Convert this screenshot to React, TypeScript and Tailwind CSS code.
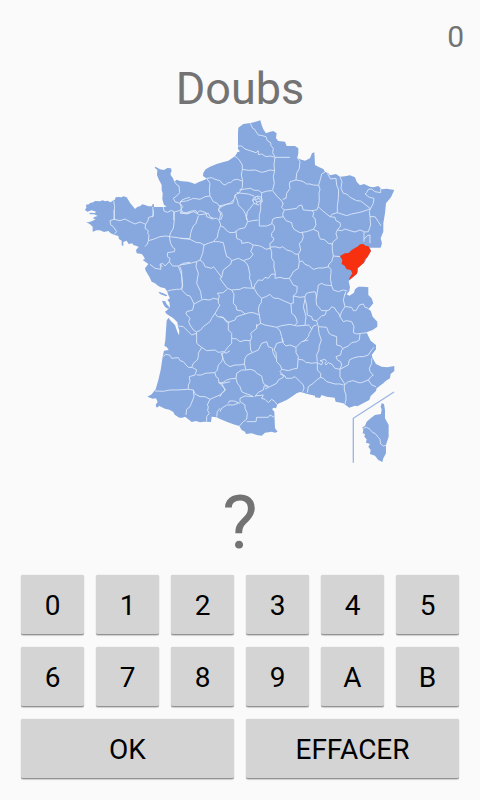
import { useState } from "react";

const COAST =
  "M541 31 532 34 512 39 490 42 475 53 474 70 474 108 474 118 480 124 472 127 467 136 458 143 445 152 428 157 410 162 390 170 377 178 370 188 369 198 381 206 365 213 355 217 345 222 335 218 325 215 300 213 290 209 283 215 279 205 272 195 272 188 275 184 273 175 262 174 252 180 240 178 226 170 224 173 232 180 231 195 236 208 245 225 245 240 248 250 247 268 252 285 260 289 254 291 222 291 222 283 218 282 216 289 205 289 195 285 187 283 180 289 173 290 165 297 158 288 151 280 145 270 140 262 130 259 125 262 115 261 107 262 104 270 98 272 92 277 82 272 75 274 68 271 60 274 45 273 40 277 30 279 27 283 18 284 19 293 15 300 22 305 35 301 48 305 45 309 28 308 30 313 43 313 53 318 45 320 38 325 47 328 35 334 25 337 18 336 30 343 38 350 38 365 50 361 60 361 72 366 85 363 92 370 102 374 115 378 117 387 125 392 125 406 130 408 130 396 140 392 146 402 157 400 150 396 160 402 158 404 170 408 176 411 168 420 170 430 185 432 190 438 195 447 188 450 200 458 205 462 195 475 197 482 208 500 215 515 225 520 235 528 242 532 255 535 262 545 265 555 270 565 262 570 268 577 270 590 262 600 255 605 260 612 280 625 292 637 294 650 298 662 297 676 292 665 285 645 272 632 265 623 260 632 258 660 256 690 253 708 260 711 266 720 252 722 248 740 242 780 235 810 227 838 215 853 202 860 218 866 228 865 233 875 227 885 230 893 238 888 255 896 268 899 280 906 284 914 298 923 307 923 315 920 325 928 335 936 348 933 360 937 372 935 393 936 395 920 410 922 420 927 440 935 460 943 478 948 485 960 495 965 498 972 515 970 530 975 545 977 555 968 575 965 585 968 593 965 585 955 583 905 576 897 582 893 588 895 593 882 620 870 635 860 650 850 660 846 670 848 682 852 705 857 705 862 720 864 725 855 740 860 764 863 767 875 790 880 808 893 825 887 832 889 845 882 868 870 872 858 888 843 890 835 910 820 918 812 930 805 932 792 943 783 943 768 922 772 905 770 888 762 878 745 875 735 888 718 888 705 872 692 865 678 860 667 878 660 892 650 892 635 878 620 872 602 865 598 880 580 875 565 865 555 865 545 865 532 850 530 835 530 825 538 822 548 808 557 800 553 808 543 810 532 806 513 830 492 833 475 855 455 862 442 873 423 870 413 880 413 902 413 906 400 902 385 910 365 910 340 915 310 918 280 933 262 943 240 920 236 905 238 895 228 880 232 870 230 852 222 840 226 830 215 825 202 810 196 795 199 780 200 768 192 750 196 745 190 735 185 730 177 718 172 705 165 704 145 703 127 696 130 690 145 675 152 660 148 652 143 655 130 655 115 645 108 620 108 615 95 595 93 588 85 590 70 580 63 568 66 558 70 550 58 545 45Z";

const ISLANDS =
  "M235 545 248 549 262 556 258 559 240 552ZM246 572 256 574 260 583 268 591 264 596 256 592 250 583ZM905 880 902 890 905 898 903 912 885 915 872 925 860 935 855 948 847 952 850 960 848 970 855 972 853 980 860 988 858 998 870 1002 865 1010 872 1020 870 1032 885 1037 895 1050 907 1056 910 1045 918 1030 918 1005 926 980 926 945 915 925 915 900 912 882Z";

const DOUBS =
  "M780 438 795 430 806 429 815 420 835 408 840 403 850 402 858 408 865 408 870 418 873 423 862 442 855 448 852 458 833 475 833 485 830 492 808 510 808 505 817 490 812 480 800 478 794 467 785 462 787 450Z";

type Region = { name: string; transform: string; d: string };

const BORDERS: Region[] = [
  {
    name: "Bretagne, Cotentin",
    transform: "translate(0 0)",
    d: "M284 215 290 224 297 228 299 248 290 258 280 265 285 275 300 280 306 270 318 265 330 262M250 291 252 303 262 307 275 301 283 306 298 302 306 305 303 290 300 280M283 306 281 330M306 305 318 310 330 308M101 273 104 290 102 305 104 330M218 291 220 305 218 322",
  },
  {
    name: "Picardie, Normandie",
    transform: "translate(300 0)",
    d: "M211 40 218 55 224 58 228 65 235 75 247 77 258 80 262 92 272 98 273 107 280 115 278 128 285 140M174 108 185 108 195 117 210 122 228 128 235 122 235 134 245 132 258 140 272 138 285 142 330 142M285 142 282 165 284 182 280 200 283 220 278 240M162 138 170 142 178 150 187 165 187 178 205 181 225 180 245 187 258 184 270 180 284 182M187 178 184 195 188 212 187 232 178 248M80 205 95 203 105 208 120 212 128 222 135 225 145 218 152 218 160 210 172 208 186 213M80 205 90 220 88 240 90 258 75 260 60 268 40 265 20 273 0 275 M0 280 8 290 0 302M90 258 100 275 112 280 118 288 125 290 140 283 158 280 163 265 165 255 178 248M125 290 115 300 122 312 118 330M178 240 195 237 212 235 222 241 235 241 245 248 262 243 278 242M170 248 185 250 205 252 222 258M222 262 235 258 245 263 247 275 235 285 222 280 218 270ZM216 272 225 268 226 261M226 269 238 265 242 274 230 276ZM232 258 235 265M228 282 232 276M245 248 244 270M165 255 172 270 175 285 190 300 198 315 200 330M222 280 210 295 202 305 200 318M278 242 290 258 303 270 310 282M308 268 318 265 320 250 330 235M0 308 20 312 40 305 50 310 60 302 78 308 80 320 100 328",
  },
  {
    name: "Ardennes, Lorraine, Alsace",
    transform: "translate(630 0)",
    d: "M22 143 30 155 28 175 20 190 18 210 0 215 -2 222 0 235M18 210 30 212 40 215 50 222 60 222 70 225 85 226M105 186 95 192 92 205 86 225 90 238 87 250 88 270 85 290M112 190 122 207 138 205 140 225 146 240 145 265 142 290 142 308M150 200 156 215 153 235 160 250 170 252 180 262 200 272 212 273 225 283 240 295M272 235 272 248 255 245 245 237 235 238 230 248 225 252 238 262 252 265 250 280 242 295M210 307 232 300 242 295",
  },
  {
    name: "Morbihan, Pays de la Loire",
    transform: "translate(0 270)",
    d: "M103 30 102 58 90 62 92 75 100 80 110 95 102 103M102 58 120 62 135 57 150 65 165 72 180 66 190 70 197 73M219 30 220 48 205 53 205 60 197 73 195 85 205 92 203 100 207 105 205 122 202 132 195 140M205 122 220 118 240 110 258 108 268 110M281 35 283 60 280 85 272 98 268 110 285 112 305 115 330 116M268 110 272 130 278 142 285 147 283 155 263 158 262 170 270 175 268 185 278 198 295 198 310 190 330 187M268 185 255 198 248 190 240 193 243 208 225 205 210 193M241 192 247 201M295 198 300 212 305 225 307 262 300 268 290 268 275 270 262 273",
  },
  {
    name: "Centre, Bourgogne",
    transform: "translate(300 270)",
    d: "M0 40 20 38 35 33 48 32 55 45 75 42 85 40 90 50 100 55 110 55 118 62 122 75M120 18 115 30 125 38 127 48 122 60M118 18 130 15 150 10 160 0M55 48 48 70 40 78 35 90 32 100 30 115M0 115 30 118 50 128 60 128 72 135M122 75 115 95 112 112 100 125 85 130 72 135M122 78 132 82 140 92 150 98 165 97M165 97 175 88 195 83 203 65 198 45M203 65 218 62 235 60M168 92 170 115 185 122 185 130 205 127 220 135 235 137 245 140 258 148 270 145M220 135 212 155 220 162 210 175 190 182 200 190 205 200 210 225 208 235 213 245 215 260 222 265M190 182 175 175 155 182M100 125 115 125 130 128 135 150 140 170 148 173 155 182 152 193 145 198 130 210 125 232 120 235 128 247 142 265 155 270M72 135 68 160 60 180 70 188 75 200 95 205 100 200 110 212 125 232M0 195 30 190 50 185 60 180M50 185 48 200 55 220 50 250 62 275 65 297M155 270 180 268 190 263 205 264 222 265M142 267 130 278M0 200 5 215 5 230 8 255 5 270 20 285 30 288 35 297 42 312",
  },
  {
    name: "Champagne, Nivernais, Jura",
    transform: "translate(510 240)",
    d: "M34 30 32 45 32 60 28 75 28 108 50 108 65 102 68 88 78 83 90 82 100 80M66 100 73 108 73 120 65 130 65 140 72 145 68 155 60 160 60 172 75 170 90 174 98 170 110 180 125 184 135 192 145 193M60 172 65 185 65 205 72 215 72 232 76 250 75 265 90 262 105 266 118 265 125 255 130 245 145 235 148 215 157 213M12 295 14 285 25 270 38 271 45 262 55 265 65 252 76 253M148 215 145 193 152 180 148 160 155 155 160 140 157 127M100 40 95 52 103 60 98 72 100 80 108 92 125 98 127 108 132 118 150 128 170 125 190 118 198 105 195 85 188 80 192 68 185 62 160 60 155 45 145 48 140 55 120 58 103 60M205 50 200 60 185 62M190 118 205 125 207 138 212 148 222 148 235 160 247 162 250 155 262 145 258 130 262 120 272 108 270 98 258 92 255 82 240 80 225 68 215 60 205 50M240 80 246 73 262 68M262 68 275 72 290 77 305 72 330 67M262 120 275 122 285 117 300 122 315 126 330 120M247 162 247 180 250 198 245 215 237 222 235 230 243 238 243 250 241 265 245 287M250 198 270 200M157 213 165 223 178 228 190 238 205 234 220 234 237 230M118 265 130 285 142 290 140 308 130 318 130 340M130 318 150 322 165 320 168 312 175 308 195 305 198 312 200 325M165 320 165 330M200 320 203 300 205 285 215 280 225 285 245 287 250 300 265 305 280 300 292 303M287 305 285 315",
  },
  {
    name: "Belfort, Haut-Rhin",
    transform: "translate(630 270)",
    d: "M242 25 238 35 240 50 242 75 235 95 225 96 210 90M240 50 255 50 265 65 273 78M222 96 222 125M222 118 232 107 240 105 240 130",
  },
  {
    name: "Aquitaine, Charentes",
    transform: "translate(180 540)",
    d: "M162 42 185 30 190 28 210 30 220 25 235 28 238 18 232 10 250 8M162 42 158 60 140 65 138 72 150 85 146 95 150 105 160 120 168 125M235 28 235 40 240 45 225 70 215 85 210 95 190 110 180 122 170 125 168 132M115 108 130 110 145 125 155 135 170 130M170 130 170 145 170 160 185 172 175 190 175 200 172 210 160 220 155 232M185 172 200 182 225 180 235 187 250 185 258 190 270 182M225 70 232 80 250 82 258 95 268 97M68 200 78 193 90 196 95 205 115 203 120 212 130 215 138 225 145 232 158 233 170 240 165 255 148 260 150 275 145 285 145 298M170 255 185 255 195 250 225 248 232 240 235 225 245 215 248 205 245 190M45 303 70 304 90 300 110 300 145 298 160 300 162 320 150 350 140 358 138 375M160 300 165 312 180 320 195 320 210 328 202 345 205 350 203 362 208 370 200 380 200 395M225 248 228 260 235 265 237 278 245 285 257 300 240 315 228 320 210 328M235 278 250 280 270 275M230 380 232 365 240 355",
  },
  {
    name: "Massif central, Languedoc",
    transform: "translate(420 540)",
    d: "M35 0 42 12 40 40 48 48 50 60 65 63 75 72 88 68 100 68 118 75 115 60 118 45 124 38 125 25 112 12 102 -5M125 25 138 20 150 13 158 22 165 25 175 25 190 32 213 42 215 70 225 78 230 90 232 98 225 106M75 72 50 80 45 90 25 97 25 120 35 130 35 145M0 80 12 85 25 97M118 75 122 100 110 108 110 115 92 130 95 142 90 155 92 180 97 188M110 102 110 112M35 145 50 147 60 155 75 151 90 152M35 145 35 160 25 170 10 190 5 190 10 208 15 220 30 230 45 225 60 225 73 222M122 100 135 105 150 108 170 112 185 107 210 103 230 108 268 105M97 188 115 180 125 160 140 155 145 170 158 175 158 185 167 205M97 188 82 195 75 205 73 222 78 240M170 112 180 122 185 140 190 155 170 160 162 180 168 188 170 215 182 228 185 238M185 145 190 160 198 168 210 165 228 172M213 42 220 38M255 30 250 50 258 80 255 105M228 172 245 155 265 150M228 172 228 188 235 200 232 235 220 237 205 242 185 238M235 208 250 210 258 218 270 218M185 238 180 245 190 255 190 262 175 270 170 280 150 290 135 297M78 240 65 240 50 250 48 265 52 280 60 290 65 305 75 310 90 315 100 320M78 240 92 238 105 243 110 250 125 258 130 280 145 290M48 265 30 267 20 270 10 277 0 280M5 280 15 300 5 310 0 320M145 290 133 287 130 300 115 307 105 320M130 315 125 325 135 328 145 338 155 328 165 335 172 345M105 318 130 315M100 320 75 318 60 325 60 335 75 345 75 355 82 370 80 388 70 395 58 408M0 365 5 355 20 345 40 345 55 340M25 340 28 333 42 333 60 340M80 395 108 395 110 382 145 382 150 375 163 382M180 252 195 258 198 265 215 265 225 260 240 275 250 285 252 295 248 305",
  },
  {
    name: "Rhône-Alpes, Provence",
    transform: "translate(660 540)",
    d: "M15 28 20 45 22 75 35 80 38 90 50 92M50 18 48 30 50 45 55 50 65 62 80 62 75 75 65 78 50 92 55 110M80 62 88 60 95 50 105 55 110 65 115 68 120 80M135 12 130 30 135 50 125 65 120 80 130 95 140 92 155 95 162 110 160 128 170 132 185 130 202 128M135 50 155 52 160 62 168 62 178 45 190 42 195 52 205 55M55 110 80 112 87 130 95 135 110 140 110 165 122 168 130 178M180 132 178 150 170 155 155 158 145 168 130 175 125 180 122 195 108 200 112 210 122 215 125 225 120 238M55 110 57 130 64 150 57 170 57 180 50 195 52 215M28 107 35 118 28 130 25 140 10 155M35 118 40 108 50 105M30 220 52 218 65 225 68 215 60 212 75 208 80 215 75 220 78 225 85 218 95 222 105 235 120 238 120 260 133 280 133 300 138 315 138 330 135 342M52 218 52 240 62 250 62 262 50 270 40 280 25 290 22 308M62 262 70 265 80 275 105 282 120 282 130 285M120 238 135 230 145 225 148 210 158 205 175 200 190 200 205 195 215 180 222 172M133 285 145 275 160 272 175 278 185 278 205 270 213 260 220 255 210 245 208 235 215 220 215 205M205 270 215 285 228 290M190 415 200 412 210 418 218 428 225 430 235 442 240 448 242 462 250 468 258 466",
  },
];

const KEYS = ["0", "1", "2", "3", "4", "5", "6", "7", "8", "9", "A", "B"];

function FranceMap() {
  return (
    <svg viewBox="0 18 960 1056" className="h-auto w-2/3 self-center" role="img" aria-label="Carte des départements">
      <path d={COAST + ISLANDS} fill="#86a8df" />
      {BORDERS.map((region) => (
        <g key={region.name} transform={region.transform}>
          <path d={region.d} fill="none" stroke="#dce6f7" strokeWidth="2.7" strokeLinejoin="round" />
        </g>
      ))}
      <path d={DOUBS} fill="#f73110" />
      <path d="M942 846 820 925V1058" fill="none" stroke="#9ab6e4" strokeWidth="4" />
    </svg>
  );
}

function Key({ label, wide, onPress }: { label: string; wide?: boolean; onPress: () => void }) {
  return (
    <button
      type="button"
      onClick={onPress}
      className={`${wide ? "col-span-3" : "col-span-1"} h-15 rounded-[2px] border-b border-[#929292] bg-[#d4d4d4] pt-1 text-[28px] leading-8 text-black shadow-[0_1px_1px_#d0d0d0,0_0_1px_#bbbbbb]`}
    >
      {label}
    </button>
  );
}

export default function App() {
  const [answer, setAnswer] = useState("");

  return (
    <main className="flex min-h-screen flex-col bg-[#fafafa] font-[Roboto,sans-serif] text-[#737373]">
      <p className="px-4 pt-[17px] text-right text-[30px] leading-10">0</p>
      <h1 className="mt-1 text-center text-[45px] leading-[55px]">Doubs</h1>
      <FranceMap />
      <output className="pt-0.5 text-center text-[75px] leading-[105px]">{answer || "?"}</output>
      <div className="grid grid-cols-6 gap-3 px-[21px] pb-5">
        {KEYS.map((key) => (
          <Key key={key} label={key} onPress={() => setAnswer((answer + key).slice(0, 3))} />
        ))}
        <Key label="OK" wide onPress={() => setAnswer("")} />
        <Key label="EFFACER" wide onPress={() => setAnswer("")} />
      </div>
    </main>
  );
}
